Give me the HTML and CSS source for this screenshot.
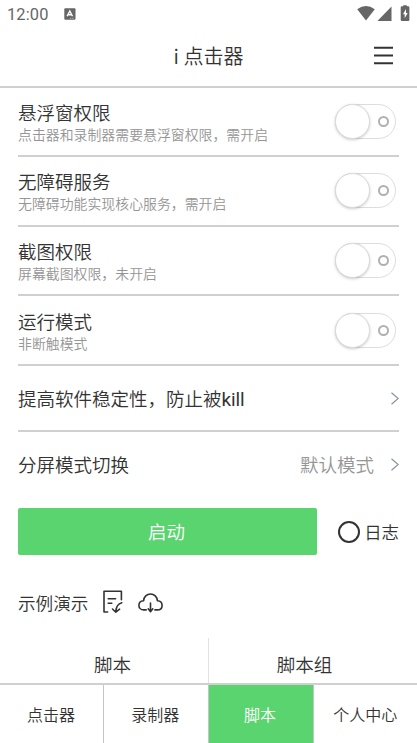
FILE: index.html
```html
<!DOCTYPE html>
<html lang="zh-CN">
<head>
<meta charset="utf-8">
<meta name="viewport" content="width=device-width, initial-scale=1">
<title>i 点击器</title>
<link rel="stylesheet" href="styles.css">
</head>
<body>
<div class="status">
  <span class="clock">12:00</span>
  <svg class="app" width="12" height="12" viewBox="0 0 12 12"><rect x=".3" y=".2" width="11.2" height="11.6" rx="1" fill="#666"/><path d="M3.1 8.2L5.8 3L8.5 8.2M4.2 6.8h3.2" fill="none" stroke="#fff" stroke-width="1.4"/><path d="M6 10.4h1.2M8.4 10.4h1.2" stroke="#ddd" stroke-width=".7"/></svg>
  <svg class="signals" width="54" height="18" viewBox="0 0 54 18"><path d="M.2 4.2Q9 -2.2 17.8 4.2L9 15.4Z" fill="#666"/><path d="M34.5 1.5V16H20.4Z" fill="#666"/><path d="M46.2 1.2V.3h3.7v.9h1.3q1.2 0 1.2 1.2v12.3q0 1.3-1.2 1.3h-6.3q-1.2 0-1.2-1.3V2.4q0-1.2 1.2-1.2Z" fill="#666"/><path d="M49 4l-3 5.2h1.7v4l3-5.3H49Z" fill="#fff"/></svg>
</div>
<header class="header">
  <h1>i 点击器</h1>
  <svg class="menu" width="20" height="20" viewBox="0 0 20 20"><path d="M0 1.7h19M0 9.6h19M0 17.2h19" stroke="#333" stroke-width="2"/></svg>
</header>
<main class="settings">
  <section class="row permission"><div><h2>悬浮窗权限</h2><p>点击器和录制器需要悬浮窗权限，需开启</p></div><span class="switch"></span></section>
  <section class="row permission"><div><h2>无障碍服务</h2><p>无障碍功能实现核心服务，需开启</p></div><span class="switch"></span></section>
  <section class="row permission"><div><h2>截图权限</h2><p>屏幕截图权限，未开启</p></div><span class="switch"></span></section>
  <section class="row permission"><div><h2>运行模式</h2><p>非断触模式</p></div><span class="switch"></span></section>
  <section class="row link stability"><h2>提高软件稳定性，防止被<span class="latin">kill</span></h2><svg class="chevron" width="8" height="13" viewBox="0 0 8 13"><path d="M.5 .8L7.2 6.5L.5 12.2"/></svg></section>
  <section class="row link last"><h2>分屏模式切换</h2><span class="value">默认模式</span><svg class="chevron" width="8" height="13" viewBox="0 0 8 13"><path d="M.5 .8L7.2 6.5L.5 12.2"/></svg></section>
  <div class="actions"><button class="start">启动</button><span class="log"><i class="radio"></i>日志</span></div>
  <div class="demo"><span>示例演示</span>
    <svg class="doc" width="20" height="24" viewBox="0 0 20 24"><path d="M4.6 22H1V1.3H18.4V9.7M5.2 8.7h7.4M5.2 13.3h3.6"/><path d="M18.8 12.8Q13.3 14.2 12.8 21.5M9.5 19L12.8 22.2L16.6 19.2"/></svg>
    <svg class="cloud" width="25" height="20" viewBox="0 0 25 20"><path d="M8.2 16.9H5.8C2.6 16.9.9 14.8.9 12.4C.9 9.9 2.8 8 5.6 7.8C5.8 3.7 8.8 1 12.5 1S19.2 3.7 19.4 7.8C22.2 8 24.1 9.9 24.1 12.4S22.3 16.9 19.3 16.9H16.9M12.5 10v8.5M10.2 15.8l2.3 2.9l2.3-2.9"/></svg>
  </div>
</main>
<nav class="scripts"><span>脚本</span><span>脚本组</span></nav>
<nav class="tabs"><span>点击器</span><span>录制器</span><span class="active">脚本</span><span>个人中心</span></nav>
</body>
</html>
```
FILE: styles.css
```css
*, *::before, *::after { box-sizing: border-box; }
body {
  margin: 0; width: 417px; height: 743px; overflow: hidden;
  display: flex; flex-direction: column;
  background: #fff; color: #333;
  font-family: "Noto Sans CJK SC", sans-serif; font-weight: 350;
}
h1, h2, p { margin: 0; font-weight: 350; white-space: nowrap; }
svg { display: block; flex: none; }
.status { height: 28px; display: flex; align-items: center; padding: 0 7px; flex: none; }
.clock { font: 400 16.4px/28px Roboto, sans-serif; color: #666; letter-spacing: .15px; width: 57px; padding-top: 1px; }
.signals { margin-left: auto; margin-right: -1px; }
.header { height: 59.5px; flex: none; display: flex; align-items: center; justify-content: center; border-bottom: 2px solid #d0d0d0; position: relative; }
h1 { font-size: 20px; line-height: 28px; padding-bottom: 1px; }
.menu { position: absolute; right: 23px; top: 18px; }
.settings { padding: 0 18px; flex: 1; }
.row { display: flex; align-items: center; border-bottom: 2px solid #d0d0d0; }
h2, .value { font-size: 18.5px; line-height: 25px; }
.permission { height: 69.6px; justify-content: space-between; padding-top: 1px; }
.permission p { font-size: 13.9px; line-height: 19px; color: #959595; }
.switch { width: 61px; height: 35px; margin-right: 3px; margin-bottom: 1px; border: 1px solid #ddd; border-radius: 18px; position: relative; flex: none; }
.switch::before { content: ""; position: absolute; left: -1px; top: -1px; width: 35px; height: 35px; border: 1px solid #dadada; border-radius: 50%; background: #fff; box-shadow: 0 1px 3px #0003; }
.switch::after { content: ""; position: absolute; right: 6px; top: 11px; width: 11px; height: 11px; border: 2px solid #b0b0b0; border-radius: 50%; }
.link { height: 66px; }
.stability { padding-top: 2px; }
.latin { font-family: Roboto, sans-serif; font-size: 19px; font-weight: 400; letter-spacing: -.15px; }
.last { border: 0; }
.value { color: #959595; margin-left: auto; }
.chevron { margin-left: auto; fill: none; stroke: #8792a0; stroke-width: 1.2; }
.value + .chevron { margin-left: 17px; }
.actions { display: flex; align-items: center; margin-top: 10.4px; height: 47px; }
.start { width: 299px; height: 47px; padding: 0 2px 1px 0; border: 0; border-radius: 2px; background: #59d46e; color: #fff; font: 350 18.5px/27px "Noto Sans CJK SC", sans-serif; }
.log { margin-left: auto; display: flex; align-items: center; font-size: 17.4px; gap: 4.5px; white-space: nowrap; }
.radio { width: 22px; height: 22px; border: 2px solid #333; border-radius: 50%; }
.demo { display: flex; align-items: center; margin-top: 34px; height: 28px; font-size: 17.6px; line-height: 26px; }
.demo svg { fill: none; stroke: #333; stroke-width: 1.6; stroke-linecap: round; stroke-linejoin: round; }
.demo .doc { margin-left: 15px; margin-bottom: 2px; }
.demo .cloud { margin-left: 15px; margin-bottom: 1px; }
.scripts { display: flex; flex: none; height: 45px; font-size: 18.5px; }
.scripts span { flex: 1; display: flex; align-items: center; justify-content: center; padding-top: 6px; }
.scripts span:first-child { border-right: 1px solid #e2e2e2; padding-left: 17px; }
.scripts span:last-child { padding-right: 17px; }
.tabs { display: grid; grid-template-columns: 104px 104.5px 105px 1fr; flex: none; height: 60px; border-top: 2px solid #d0d0d0; font-size: 16px; }
.tabs span { display: flex; align-items: center; justify-content: center; border-right: 1px solid #c4c4c4; padding-right: 1px; }
.tabs span:last-child { border: 0; padding: 0; }
.tabs .active { background: #59d46e; color: #fff; }
```
